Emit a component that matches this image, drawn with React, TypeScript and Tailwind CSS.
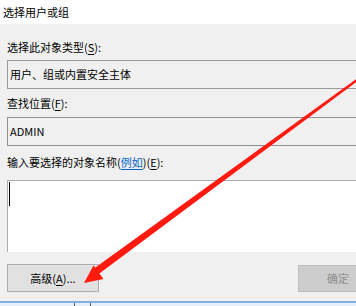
import React from "react";

const font = { fontFamily: '"Noto Sans CJK SC", "Noto Sans", sans-serif' };

function U({ children }: { children: React.ReactNode }) {
  return <span className="underline underline-offset-2">{children}</span>;
}

export default function App() {
  return (
    <div className="relative w-[356px] h-[306px] overflow-hidden bg-[#f0f0f0] text-[11px] text-black flex flex-col" style={font}>
      <div className="h-[24px] bg-white flex items-center pl-[3px] shrink-0">选择用户或组</div>
      <div className="flex flex-col pl-[7px]">
        <div className="mt-[15px] h-[16px] leading-[16px]">选择此对象类型(<U>S</U>):</div>
        <div className="mt-[5px] h-[29px] border border-r-0 border-[#9a9a9a] flex items-center pl-[2px]">用户、组或内置安全主体</div>
        <div className="mt-[6px] h-[16px] leading-[16px]">查找位置(<U>F</U>):</div>
        <div className="mt-[6px] h-[29px] border border-r-0 border-[#8f8f8f] flex items-center pl-[2px]">ADMIN</div>
        <div className="mt-[8px] h-[16px] leading-[16px]">
          输入要选择的对象名称(<span className="text-[#0066cc] underline underline-offset-2">例如</span>)(<U>E</U>):
        </div>
        <div className="mt-[10px] h-[72px] bg-white border border-r-0 border-b-0 border-[#abadb3] relative">
          <div className="absolute left-[1px] top-[1px] w-[1px] h-[24px] bg-black" />
        </div>
      </div>
      <div className="flex justify-between items-start mt-[12px] pl-[7px]">
        <div className="w-[92px] h-[28px] bg-[#e1e1e1] border border-[#adadad] flex items-center justify-center">
          高级(<U>A</U>)...
        </div>
        <div className="w-[80px] h-[27px] mt-[1px] mr-[-22px] bg-[#cccccc] border border-[#bfbfbf] flex items-center justify-center text-[#8d8d8d]">
          确定
        </div>
      </div>
      <div className="mt-[5px] h-[1px] bg-[#f3e6dc]" />
      <div className="mt-[3px] h-[2px] bg-[#7eb0e0]" />
      <div className="flex-1 bg-[#e6eef7] relative">
        <div className="absolute left-[74px] top-0 w-[1px] h-full bg-[#555]" />
        <div className="absolute left-[90px] top-0 w-[1px] h-full bg-[#555]" />
      </div>
      <svg className="absolute left-0 top-0 pointer-events-none" width="356" height="306" viewBox="0 0 356 306">
        <polygon points="357,78.5 357,81.5 98,274.5 94,268.5" fill="#ff1a0f" />
        <polygon points="84,283 93.5,265.5 103.5,279" fill="#ff1a0f" />
      </svg>
    </div>
  );
}
